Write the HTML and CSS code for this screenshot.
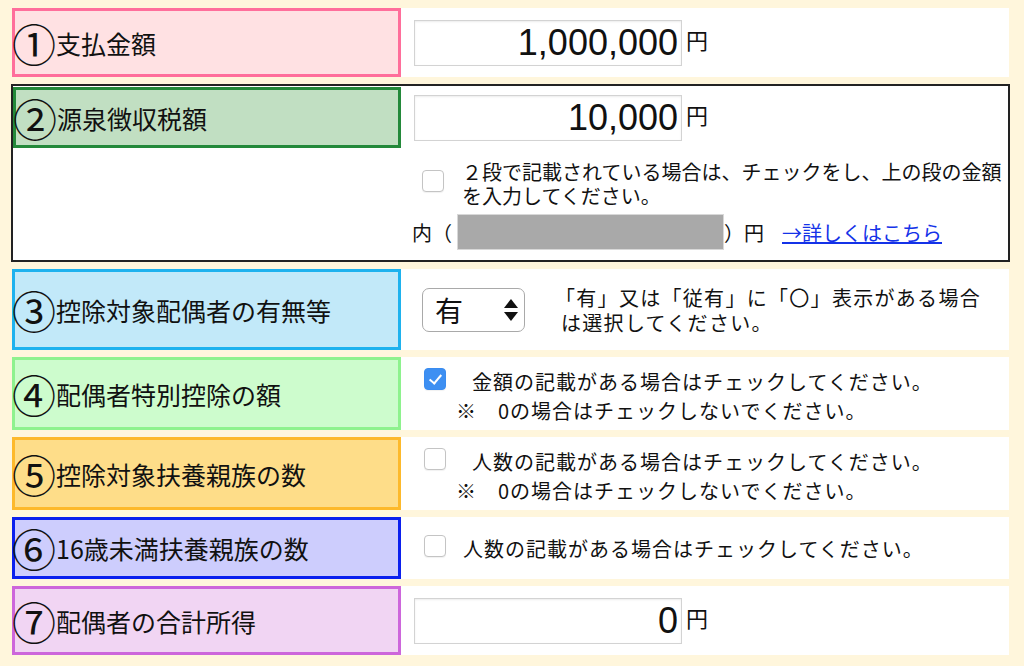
FILE: index.html
```html
<!DOCTYPE html>
<html lang="ja">
<head>
    <meta charset="UTF-8">
    <title>源泉徴収票の入力</title>
    <link rel="stylesheet" href="styles.css">
</head>
<body>

<div class="form">
    <!-- ① -->
    <div class="row">
        <div class="label pink h69"><span class="num">①</span>支払金額</div>
        <div class="field">
            <input class="amount" type="text" value="1,000,000">
            <span class="yen">円</span>
        </div>
    </div>

    <!-- ② -->
    <div class="row-box">
        <div class="row">
            <div class="label green h61"><span class="num">②</span>源泉徴収税額</div>
            <div class="field">
                <input class="amount" type="text" value="10,000">
                <span class="yen">円</span>
            </div>
        </div>
        <div class="note">
            <input class="check" type="checkbox">
            <span class="note-text">
                <span class="line">２段で記載されている場合は、チェックをし、上の段の金額</span>
                <span class="line">を入力してください。</span>
            </span>
        </div>
        <div class="breakdown">
            <span>内（</span>
            <input class="sub-amount" type="text" disabled>
            <span>）円</span>
            <a class="more" href="#">→詳しくはこちら</a>
        </div>
    </div>

    <!-- ③ -->
    <div class="row">
        <div class="label blue h81"><span class="num">③</span>控除対象配偶者の有無等</div>
        <div class="field">
            <span class="select-wrap">
                <select class="select">
                    <option>有</option>
                    <option>無</option>
                </select>
                <svg class="arrows" width="14" height="22" viewBox="0 0 14 22">
                    <polygon points="0,9 7,0 14,9" fill="#111"/>
                    <polygon points="0,13 14,13 7,22" fill="#111"/>
                </svg>
            </span>
            <span class="hint wide">
                <span class="line">「有」又は「従有」に「〇」表示がある場合</span>
                <span class="line">は選択してください。</span>
            </span>
        </div>
    </div>

    <!-- ④ -->
    <div class="row">
        <div class="label lime h73"><span class="num">④</span>配偶者特別控除の額</div>
        <div class="checks">
            <div class="check-line">
                <input class="check" type="checkbox" checked>
                <span class="hint gap-l">金額の記載がある場合はチェックしてください。</span>
            </div>
            <div class="hint sub-note">※　0の場合はチェックしないでください。</div>
        </div>
    </div>

    <!-- ⑤ -->
    <div class="row">
        <div class="label orange h73"><span class="num">⑤</span>控除対象扶養親族の数</div>
        <div class="checks">
            <div class="check-line">
                <input class="check" type="checkbox">
                <span class="hint gap-l">人数の記載がある場合はチェックしてください。</span>
            </div>
            <div class="hint sub-note">※　0の場合はチェックしないでください。</div>
        </div>
    </div>

    <!-- ⑥ -->
    <div class="row">
        <div class="label indigo h62"><span class="num">⑥</span>16歳未満扶養親族の数</div>
        <div class="checks single">
            <div class="check-line">
                <input class="check" type="checkbox">
                <span class="hint gap-s">人数の記載がある場合はチェックしてください。</span>
            </div>
        </div>
    </div>

    <!-- ⑦ -->
    <div class="row">
        <div class="label purple h69"><span class="num">⑦</span>配偶者の合計所得</div>
        <div class="field">
            <input class="amount" type="text" value="0">
            <span class="yen">円</span>
        </div>
    </div>
</div>

</body>
</html>
```

FILE: styles.css
```css
body {
    margin: 0;
    background-color: #fff6dc;
    font-family: "Noto Sans CJK JP", sans-serif;
    color: #111;
}
.form {
    display: flex;
    flex-direction: column;
    gap: 7px;
    width: 997px;
    padding: 8px 0 0 12px;
}
.row {
    display: flex;
    align-items: center;
    background-color: #fff;
}
.row-box {
    margin: 0 -1px;
    border: 2px solid #222;
    background-color: #fff;
    padding-bottom: 10px;
}
.row-box .row {
    padding-top: 1px;
}
.label {
    display: flex;
    align-items: center;
    flex: none;
    width: 389px;
    box-sizing: border-box;
    border: 3px solid;
    padding-left: 1px;
    font-size: 25px;
    white-space: nowrap;
}
.row-box .label {
    width: 388px;
}
.num {
    font-size: 44px;
    line-height: 1;
    margin: 0 0 0 -4px;
}
.h61 { height: 61px; }
.h62 { height: 62px; }
.h69 { height: 69px; }
.h73 { height: 73px; }
.h81 { height: 81px; }

.pink   { border-color: #ff6e9b; background-color: #ffe1e3; }
.green  { border-color: #23893a; background-color: #c1dfc2; }
.blue   { border-color: #1eb2ee; background-color: #c2e9f9; }
.lime   { border-color: #8ef28e; background-color: #cdfccd; }
.orange { border-color: #fdb92b; background-color: #fedd89; }
.indigo { border-color: #0b20ee; background-color: #cdcdfd; }
.purple { border-color: #cd66db; background-color: #f1d5f3; }

.field {
    display: flex;
    align-items: center;
    margin-left: 13px;
}
.amount {
    width: 268px;
    height: 46px;
    box-sizing: border-box;
    border: 1px solid #d3d3d3;
    box-shadow: inset 0 1px 2px rgba(0, 0, 0, 0.08);
    padding: 0 3px 0 0;
    font-family: "Liberation Sans", Arial, sans-serif;
    font-size: 36px;
    text-align: right;
    color: #111;
    outline: none;
}
.yen {
    align-self: flex-start;
    margin: 8px 0 0 4px;
    font-size: 22px;
    line-height: 22px;
}

.check {
    appearance: none;
    -webkit-appearance: none;
    flex: none;
    width: 22px;
    height: 22px;
    margin: 0;
    box-sizing: border-box;
    border: 1px solid #c4c4c4;
    border-radius: 4px;
    background-color: #fff;
    box-shadow: 0 1px 1px rgba(0, 0, 0, 0.06);
    position: relative;
}
.check:checked {
    border-color: #3a8cf0;
    background-color: #3d8ff2;
}
.check:checked::after {
    content: "";
    position: absolute;
    left: 7px;
    top: 3px;
    width: 5px;
    height: 10px;
    border: solid #fff;
    border-width: 0 2px 2px 0;
    transform: rotate(40deg);
}

.line {
    display: block;
    height: 24px;
    line-height: 24px;
}
.note {
    display: flex;
    align-items: flex-start;
    margin: 12px 0 0 409px;
}
.note .check {
    margin-top: 10px;
}
.note-text {
    margin-left: 18px;
    font-size: 20px;
}
.breakdown {
    display: flex;
    align-items: center;
    margin: 6px 0 0 399px;
    font-size: 20px;
}
.sub-amount {
    width: 267px;
    height: 36px;
    box-sizing: border-box;
    margin: 0 0 0 5px;
    border: 1px solid #d8d8d8;
    background-color: #a9a9a9;
}
.more {
    margin-left: 18px;
    color: #1432e8;
    text-decoration: underline;
}

.select-wrap {
    position: relative;
    margin-left: 8px;
}
.select {
    appearance: none;
    -webkit-appearance: none;
    display: block;
    width: 103px;
    height: 44px;
    box-sizing: border-box;
    border: 1px solid #a9a9a9;
    border-radius: 7px;
    background-color: #fff;
    padding-left: 12px;
    font-family: "Noto Sans CJK JP", sans-serif;
    font-size: 28px;
    color: #111;
}
.arrows {
    position: absolute;
    top: 11px;
    right: 7px;
}
.hint {
    font-size: 20px;
    letter-spacing: 1px;
}
.hint.wide {
    margin-left: 36px;
    letter-spacing: 1.3px;
}
.hint.wide .line {
    height: 25px;
    line-height: 25px;
}
.hint.wide .line:first-child {
    margin-left: -6px;
}

.checks {
    margin-left: 23px;
    padding-top: 5px;
}
.checks.single {
    padding-top: 0;
}
.check-line {
    display: flex;
    align-items: center;
    height: 30px;
}
.check-line .check {
    margin-top: -4px;
}
.gap-l {
    margin-left: 26px;
}
.gap-s {
    margin-left: 17px;
}
.sub-note {
    line-height: 30px;
    padding-left: 32px;
}
```
